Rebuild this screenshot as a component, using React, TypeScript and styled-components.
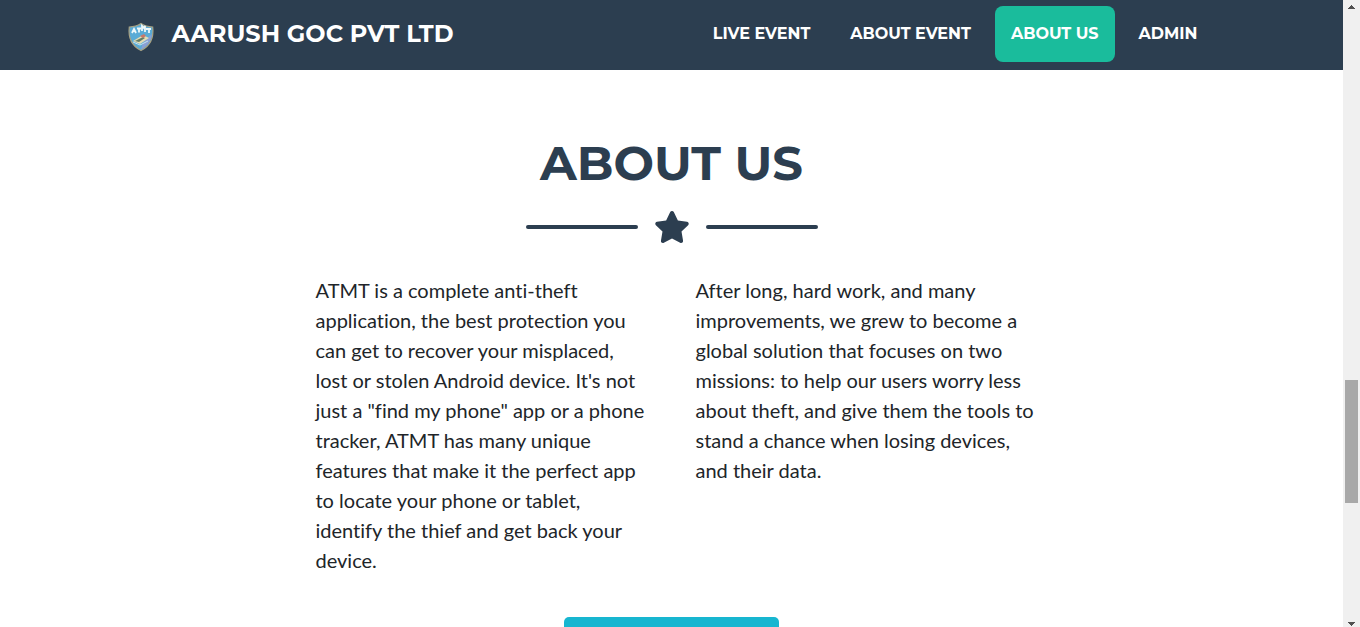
import React from "react";
import styled, { createGlobalStyle } from "styled-components";
import { FaStar } from "react-icons/fa";

const navy = "#2c3e50";
const teal = "#1abc9c";
const display = 'Montserrat, Inter, "Liberation Sans", sans-serif';

const GlobalStyle = createGlobalStyle`
  *, *::before, *::after { box-sizing: border-box; }
  body {
    margin: 0;
    background: #fff;
    color: #212529;
    font-family: Lato, "Liberation Sans", sans-serif;
    overflow: hidden;
  }
`;

const Shell = styled.div`
  display: flex;
  height: 100vh;
  overflow: hidden;
`;

const Page = styled.div`
  flex: 1;
  min-width: 0;
  overflow: hidden;
`;

const Header = styled.header`
  background: ${navy};
`;

const HeaderInner = styled.div`
  display: flex;
  align-items: center;
  justify-content: space-between;
  max-width: 1092px;
  height: 70px;
  margin: 0 auto;
  padding: 0 0 2px;
`;

const Brand = styled.a`
  display: flex;
  align-items: center;
  gap: 16px;
  color: #fff;
  font: 700 24px/32px ${display};
  text-decoration: none;
  white-space: nowrap;
`;

const Shield = styled.svg`
  width: 30px;
  height: 30px;
  margin-top: 6px;
`;

const NavList = styled.ul`
  display: flex;
  gap: 8px;
  margin: 0;
  padding: 0 4px 0 0;
  list-style: none;
`;

const NavLink = styled.a<{ $active?: boolean }>`
  display: block;
  padding: 16px;
  border-radius: 8px;
  background: ${(p) => (p.$active ? teal : "transparent")};
  color: #fff;
  font: 700 16px/24px ${display};
  text-decoration: none;
  white-space: nowrap;
`;

const Section = styled.section`
  display: flex;
  flex-direction: column;
  align-items: center;
  padding: 64px 0 96px;
`;

const Title = styled.h2`
  margin: 0;
  color: ${navy};
  font: 700 48px/58px ${display};
`;

const Divider = styled.div`
  display: flex;
  align-items: center;
  gap: 16px;
  margin: 19px 0 32px;
  color: ${navy};
`;

const Line = styled.span`
  width: 112px;
  height: 4px;
  border-radius: 4px;
  background: currentColor;
`;

const Star = styled(FaStar)`
  width: 36px;
  height: 32px;
`;

const Columns = styled.div`
  display: grid;
  grid-template-columns: repeat(2, 1fr);
  width: 100%;
  max-width: 760px;
`;

const Lead = styled.p`
  margin: 0;
  padding: 0 24px;
  font-size: 20px;
  line-height: 30px;
  font-variant-ligatures: none;

  &:last-child {
    padding-right: 16px;
  }
`;

const CallToAction = styled.button`
  width: 215px;
  height: 48px;
  margin-top: 42px;
  border: 0;
  border-radius: 5px;
  background: #17b6d0;
`;

const ScrollTrack = styled.div`
  display: flex;
  flex-direction: column;
  align-items: center;
  width: 17px;
  padding: 5px 0 1px;
  background: #f0f0f0;
`;

const Arrow = styled.svg`
  width: 7px;
  height: 4px;
  fill: #505050;
`;

const TrackSpace = styled.div<{ $grow: number }>`
  flex: ${(p) => p.$grow} 1 0;
`;

const Thumb = styled.div`
  flex: 123 1 0;
  width: 13px;
  background: #a8a8a8;
`;

const links = ["LIVE EVENT", "ABOUT EVENT", "ABOUT US", "ADMIN"];

export default function App() {
  return (
    <>
      <GlobalStyle />
      <Shell>
        <Page>
          <Header>
            <HeaderInner>
              <Brand href="#top">
                <Shield viewBox="0 0 30 30" aria-hidden="true">
                  <path d="M15 1.5Q20 4.8 26.7 5C28 16 24 24 15 28.5C6 24 2 16 3.3 5Q10 4.8 15 1.5Z" fill="#5aabd6" stroke="#a9a283" strokeWidth="1.2" />
                  <path d="M15 27.5C22 23.500 25.500 18 25.800 12L17 21Z" fill="#8b9fd4" />
                  <path d="M6 11l2-4 2 4M11 6.500h4M13 6.500v4M16 9V4l2 2 1-2v6M20 7h5M23 7v4" fill="none" stroke="#eef8fa" strokeWidth="1.800" />
                  <path d="M7 19l10-6 6 3-9 6Z" fill="#e3dcb4" />
                  <path d="M9 19l8-4 2 1-6 4Z" fill="#607c68" />
                  <path d="M14 14l4-2 2 2-3 2Z" fill="#c87868" />
                  <path d="M7 20l7 3 8-4" fill="none" stroke="#c5e3ef" />
                </Shield>
                AARUSH GOC PVT LTD
              </Brand>
              <nav aria-label="Main">
                <NavList>
                  {links.map((label) => (
                    <li key={label}>
                      <NavLink href="#about" $active={label === "ABOUT US"}>
                        {label}
                      </NavLink>
                    </li>
                  ))}
                </NavList>
              </nav>
            </HeaderInner>
          </Header>
          <Section id="about">
            <Title>ABOUT US</Title>
            <Divider aria-hidden="true">
              <Line />
              <Star />
              <Line />
            </Divider>
            <Columns>
              <Lead>
                ATMT is a complete anti-theft application, the best protection
                you can get to recover your misplaced, lost or stolen Android
                device. It's not just a "find my phone" app or a phone tracker,
                ATMT has many unique features that make it the perfect app to
                locate your phone or tablet, identify the thief and get back
                your device.
              </Lead>
              <Lead>
                After long, hard work, and many improvements, we grew to become
                a global solution that focuses on two missions: to help our
                users worry less about theft, and give them the tools to stand
                a chance when losing devices, and their data.
              </Lead>
            </Columns>
            <CallToAction type="button" aria-label="Download" />
          </Section>
        </Page>
        <ScrollTrack aria-hidden="true">
          <Arrow viewBox="0 0 7 4" shapeRendering="crispEdges">
            <path d="M3 0h1v1h1v1h1v1h1v1H0V3h1V2h1V1h1Z" />
          </Arrow>
          <TrackSpace $grow={371} />
          <Thumb />
          <TrackSpace $grow={119} />
          <Arrow viewBox="0 0 7 4" shapeRendering="crispEdges">
            <path d="M0 0h7v1H6v1H5v1H4v1H3V3H2V2H1V1H0Z" />
          </Arrow>
        </ScrollTrack>
      </Shell>
    </>
  );
}
